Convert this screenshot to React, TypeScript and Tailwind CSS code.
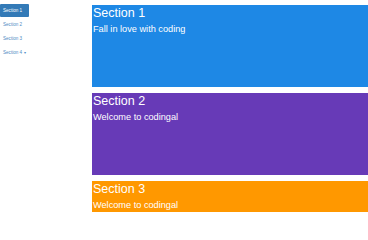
import React from "react";

const sections = [
  { title: "Section 1", text: "Fall in love with coding", bg: "bg-[#1E88E5]" },
  { title: "Section 2", text: "Welcome to codingal", bg: "bg-[#673AB7]" },
  { title: "Section 3", text: "Welcome to codingal", bg: "bg-[#FF9800]" },
];

export default function App() {
  return (
    <div
      className="flex w-[368px] h-[212px] overflow-hidden bg-white"
      style={{ fontFamily: '"Liberation Sans", Arial, sans-serif' }}
    >
      <div className="w-[92px] shrink-0 pt-[4px]">
        <ul className="flex flex-col gap-[1px] w-[29px]">
          <li className="h-[13px] rounded-[1px] bg-[#337ab7] text-white text-[4.6px] leading-[13px] pl-[3px] whitespace-nowrap">
            Section 1
          </li>
          <li className="h-[13px] text-[#4f8cc4] text-[4.6px] leading-[13px] pl-[3px] whitespace-nowrap">
            Section 2
          </li>
          <li className="h-[13px] text-[#4f8cc4] text-[4.6px] leading-[13px] pl-[3px] whitespace-nowrap">
            Section 3
          </li>
          <li className="h-[13px] text-[#4f8cc4] text-[4.6px] leading-[13px] pl-[3px] whitespace-nowrap">
            Section 4 <span className="text-[4px] ml-[1px]">▾</span>
          </li>
        </ul>
      </div>
      <div className="flex-1 flex flex-col gap-[6px] pt-[5px]">
        {sections.map((s) => (
          <div key={s.title} className={`${s.bg} h-[82px] shrink-0 text-white pl-[1px]`}>
            <h1 className="text-[12.5px] leading-[14px] pt-[1px]">{s.title}</h1>
            <p className="text-[9.2px] leading-[12px] mt-[3px]">{s.text}</p>
          </div>
        ))}
      </div>
    </div>
  );
}
